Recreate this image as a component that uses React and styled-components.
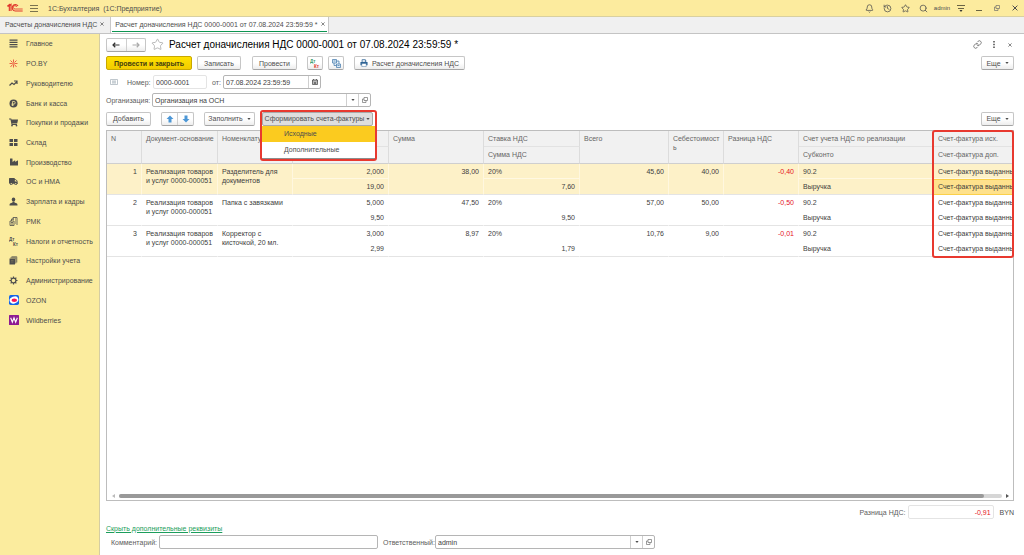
import React from "react";
import styled, { createGlobalStyle, css } from "styled-components";
import { FaShoppingCart, FaTruck, FaIndustry } from "react-icons/fa";
import { Bell, History, Star, Search, Link as LinkIcon } from "lucide-react";

const GlobalStyle = createGlobalStyle`
  * {
    box-sizing: border-box;
  }
  body {
    margin: 0;
    background: #fff;
    color: #4d4d4d;
    font-family: "Liberation Sans", Arial, sans-serif;
    font-size: 7px;
    line-height: 9px;
  }
  button, input {
    font: inherit;
    color: inherit;
    margin: 0;
    padding: 0;
    border: 0;
    background: none;
  }
  button {
    cursor: pointer;
  }
  svg {
    display: block;
    flex: none;
  }
`;

const Page = styled.div`
  display: flex;
  flex-direction: column;
  min-height: 100vh;
`;

const TitleBar = styled.header`
  display: flex;
  align-items: center;
  height: 17px;
  padding-left: 7px;
  background: #fceb9e;
  border-bottom: 1px solid #d9d0a0;
`;

const AppName = styled.span`
  flex: 1;
  margin-left: 10px;
  white-space: pre;
`;

const IconButton = styled.button`
  display: flex;
  align-items: center;
  justify-content: center;
  width: ${({ $width }) => $width || 18}px;
  height: 12px;
  color: ${({ $color }) => $color || "#4d4d4d"};
`;

const UserName = styled.button`
  width: 20px;
  font-size: 6px;
  white-space: nowrap;
`;

const TabBar = styled.nav`
  display: flex;
  height: 17px;
  background: #f0f0f0;
  border-bottom: 1px solid #c4c4c4;
`;

const Tab = styled.div`
  display: flex;
  align-items: center;
  padding: 0 ${({ $active }) => ($active ? 1 : 4)}px;
  border-right: 1px solid #c8c8c8;
  background: ${({ $active }) => ($active ? "#fff" : "transparent")};
  white-space: nowrap;
`;

const TabBody = styled.div`
  display: flex;
  align-items: center;
  align-self: stretch;
  gap: 2px;
  margin-bottom: 1px;
  padding: 0 1px 0 ${({ $active }) => ($active ? 3 : 1)}px;
  border-bottom: 1px solid ${({ $active }) => ($active ? "#0e9552" : "transparent")};
`;

const TabLink = styled.a`
  color: inherit;
  text-decoration: none;
`;

const Body = styled.div`
  display: flex;
  flex: 1;
`;

const Sidebar = styled.aside`
  flex: none;
  width: 100px;
  background: #fbec9e;
  border-right: 1px solid #d5cda3;
`;

const Menu = styled.nav`
  display: grid;
  grid-auto-rows: 1fr;
  height: 296px;
`;

const MenuItem = styled.a`
  display: flex;
  align-items: center;
  gap: 7px;
  padding-left: 8px;
  color: #4d4d4d;
  text-decoration: none;
  white-space: nowrap;
`;

const MenuIcon = styled.span`
  display: flex;
  justify-content: center;
  width: 11px;
`;

const Main = styled.main`
  display: flex;
  flex: 1;
  flex-direction: column;
  min-width: 0;
  padding: 4px 10px 6px 6px;
`;

const Row = styled.div`
  display: flex;
  align-items: center;
  flex: none;
  height: ${({ $height }) => $height || 14}px;
  margin-bottom: ${({ $after }) => $after ?? 4}px;
  white-space: nowrap;
`;

const Spacer = styled.span`
  flex: ${({ $width }) => ($width ? `0 0 ${$width}px` : "1")};
`;

const Title = styled.h1`
  flex: 1;
  margin: 0 0 0 5px;
  color: #000;
  font-size: 10px;
  font-weight: 400;
  line-height: 13px;
`;

const raised = css`
  border: 1px solid #c6c6c6;
  border-bottom-color: #a5a5a5;
  border-radius: 2px;
  background: linear-gradient(#fff 50%, #ededed);
`;

const Button = styled.button`
  ${raised}
  display: flex;
  align-items: center;
  justify-content: center;
  gap: 4px;
  flex: none;
  height: 14px;
  min-width: ${({ $width }) => $width}px;
  color: #4d4d4d;
  white-space: nowrap;

  ${({ $primary }) =>
    $primary &&
    css`
      border-color: #c9a800;
      background: linear-gradient(#ffe100, #f2cc00);
      color: #45400f;
      font-weight: 700;
    `}

  ${({ $pressed }) =>
    $pressed &&
    css`
      gap: 2px;
      border-color: #a9a9a9;
      background: #dedede;
    `}
`;

const ButtonPair = styled.div`
  ${raised}
  display: flex;
  width: ${({ $width }) => $width}px;
  height: 14px;

  button {
    flex: 1;
  }
  button + button {
    border-left: 1px solid #cfcfcf;
  }
`;

const Label = styled.label`
  flex: none;
  width: ${({ $width }) => $width}px;
  color: #5c5c5c;
`;

const Field = styled.div`
  display: flex;
  flex: 0 1 ${({ $width }) => $width}px;
  min-width: 0;
  height: 14px;
  border: 1px solid ${({ $light }) => ($light ? "#e4e4e4" : "#b5b5b5")};
  border-radius: 2px;
  background: #fff;

  button {
    flex: none;
    width: 12px;
    border-left: 1px solid #cfcfcf;
  }
`;

const Input = styled.input`
  flex: 1;
  min-width: 0;
  padding: 0 2px;
  outline: 0;
  color: ${({ $negative }) => ($negative ? "#e5141b" : "#404040")};
  text-align: ${({ $negative }) => ($negative ? "right" : "left")};
`;

const Dropdown = styled.div`
  position: relative;
  margin-left: 7px;
`;

const DropdownFrame = styled.div`
  position: absolute;
  z-index: 3;
  inset: -2px -4px -35px -2px;
  border: 2px solid #e8392f;
  border-radius: 3px;
  pointer-events: none;
`;

const DropdownList = styled.div`
  position: absolute;
  z-index: 2;
  top: 100%;
  left: 0;
  right: -2px;
  display: grid;
  grid-auto-rows: 16px;
  border-bottom: 1px solid #8d8d8d;
  background: #fff;
`;

const DropdownItem = styled.button`
  padding-left: 22px;
  background: ${({ $active }) => ($active ? "#fbcb1f" : "#fff")};
  text-align: left;
`;

const TablePanel = styled.div`
  display: flex;
  flex: 1;
  flex-direction: column;
  justify-content: space-between;
  margin-bottom: 4px;
  border: 1px solid #bdbdbd;
`;

const TableBox = styled.div`
  position: relative;
`;

const ColumnFrame = styled.div`
  position: absolute;
  inset: -1px -1px -1px auto;
  width: 9%;
  border: 2px solid #e8392f;
  border-radius: 3px;
  pointer-events: none;
`;

const Table = styled.table`
  width: 100%;
  table-layout: fixed;
  border-collapse: separate;
  border-spacing: 0;

  th:last-child, td:last-child {
    padding-right: 0;
  }
`;

const Th = styled.th`
  height: ${({ $last }) => ($last ? 17 : 16)}px;
  padding: 3px 1px 0 4px;
  border-right: 1px solid #dcdcdc;
  border-bottom: 1px solid ${({ $last }) => ($last ? "#cfcfcf" : "#e2e2e2")};
  background: #f1f1f1;
  color: #666;
  font-weight: 400;
  text-align: left;
  vertical-align: top;
  overflow-wrap: anywhere;
`;

const Td = styled.td`
  height: ${({ $half }) => $half || 31}px;
  padding: 3px 4px 0;
  overflow: hidden;
  border-right: 1px solid ${({ $selected }) => ($selected ? "#fff7df" : "transparent")};
  border-bottom: 1px solid
    ${({ $top, $selected }) => ($top ? ($selected ? "#fff8e2" : "transparent") : "#e4e4e4")};
  background: ${({ $selected }) => ($selected ? "#fdf1c8" : "#fff")};
  color: ${({ $negative }) => ($negative ? "#e5141b" : "#404040")};
  text-align: ${({ $right }) => ($right ? "right" : "left")};
  vertical-align: top;
  white-space: ${({ $wrap }) => ($wrap ? "pre-line" : "nowrap")};

  ${({ $clipped }) =>
    $clipped &&
    css`
      border-right: 0;
    `}

  ${({ $current }) =>
    $current &&
    css`
      border-bottom-color: #fbd04a;
      background: #fee18c;
      box-shadow: inset 0 1px #fbd04a;
    `}
`;

const ScrollRow = styled.div`
  display: flex;
  align-items: center;
  gap: 4px;
  height: 9px;
  padding: 0 4px 0 5px;
`;

const ScrollTrack = styled.div`
  flex: 1;
  height: 4px;
  border-radius: 2px;
  background: #d6d6d6;
`;

const ScrollThumb = styled.div`
  width: 98%;
  height: 4px;
  border-radius: 2px;
  background: #999;
`;

const ToggleLink = styled.a`
  color: #1c9e5c;
`;

const Caret = () => (
  <svg width="4" height="2" viewBox="0 0 4 2" aria-hidden="true">
    <path d="M.4 0h3.200L2 2z" fill="currentColor" />
  </svg>
);

const Cross = ({ size = 5 }) => (
  <svg width={size} height={size} viewBox="0 0 6 6" aria-hidden="true">
    <path d="M.6.6l4.800 4.800M5.400.6L.6 5.400" stroke="currentColor" strokeWidth="1" />
  </svg>
);

const OpenIcon = () => (
  <svg width="6" height="6" viewBox="0 0 12 12" fill="none" stroke="#666" strokeWidth="1.300">
    <path d="M4 1h7v6H4zM4 4H1v7h7V7" />
  </svg>
);

const Arrow = ({ back }) => (
  <svg width="8" height="6" viewBox="0 0 16 12" fill="none" stroke={back ? "#333" : "#aaa"} strokeWidth="2.400">
    <path d={back ? "M15 6H2M6.500 1.500L2 6l4.500 4.500" : "M1 6h13M9.500 1.500L14 6l-4.500 4.500"} />
  </svg>
);

const BlueArrow = ({ down }) => (
  <svg width="8" height="8" viewBox="0 0 16 16" fill="#4d97d6">
    <path d={down ? "M8 15L1 8h4V1h6v7h4z" : "M8 1l7 7h-4v7H5V8H1z"} />
  </svg>
);

const Logo = () => (
  <svg width="16" height="10" viewBox="0 0 48 30" fill="none" stroke="#e0352b" strokeWidth="3.500">
    <path d="M1 10l6-5v19M12 24V4L3 10" />
    <path d="M33 9a9.500 9.500 0 1 0-8 15h22" />
    <path d="M29 12a5 5 0 1 0-4 6h22" strokeWidth="2.500" />
  </svg>
);

const Burger = () => (
  <svg width="8" height="8" viewBox="0 0 8 8" stroke="#7a7350" strokeWidth="1">
    <path d="M0 1.500h8M0 4.500h8M0 7.500h8" />
  </svg>
);

const DtKt = ({ colored }) => (
  <svg width="10" height="9" viewBox="0 0 20 18" fontFamily="Liberation Sans" fontWeight="700" fontSize="9">
    <text x="0" y="8" fill={colored ? "#3a9c6c" : "#4d4d4d"}>Дт</text>
    <text x="8" y="17" fill={colored ? "#e0352b" : "#4d4d4d"}>Кт</text>
  </svg>
);

const Glyph = ({ children, size = 9, ...rest }) => (
  <svg width={size} height={size} viewBox="0 0 18 18" fill="#4d4d4d" {...rest}>
    {children}
  </svg>
);

const menu = [
  ["Главное", <Glyph><path d="M1 1h16v2.500H1zM1 5.500h16V8H1zM1 10h16v2.500H1zM1 14.500h16V17H1z" /></Glyph>],
  ["PO.BY", (
    <Glyph fill="none" stroke="#e8503a" strokeWidth="1.800">
      <path d="M9 1v5M3 3l4 4M15 3l-4 4M1 9h5M12 9h5M7 11l-4 5M9 12v5M11 11l4 5" />
      <circle cx="9" cy="9" r="1.500" />
    </Glyph>
  )],
  ["Руководителю", (
    <Glyph fill="none" stroke="#4d4d4d" strokeWidth="2.400">
      <path d="M1 13l5-5 4 3 6-6M10 4h6v6" />
    </Glyph>
  )],
  ["Банк и касса", (
    <Glyph>
      <circle cx="9" cy="9" r="8" />
      <path d="M7 14V5h3a2.500 2.500 0 0 1 0 5H5M5 12h5" fill="none" stroke="#fbec9e" strokeWidth="1.500" />
    </Glyph>
  )],
  ["Покупки и продажи", <FaShoppingCart size={9} />],
  ["Склад", <Glyph><path d="M1 2h7v6H1zM10 2h7v6h-7zM1 10h7v6H1zM10 10h7v6h-7z" /></Glyph>],
  ["Производство", <FaIndustry size={8} />],
  ["ОС и НМА", <FaTruck size={9} />],
  ["Зарплата и кадры", (
    <Glyph>
      <ellipse cx="9" cy="5" rx="3.500" ry="4" />
      <path d="M7 9h4v2l5 2q1 1 1 4H1q0-3 1-4l5-2z" />
    </Glyph>
  )],
  ["РМК", (
    <Glyph fill="none" stroke="#4d4d4d" strokeWidth="1.600">
      <path d="M8 6V1h8v15M2 8h8v9H2zM5 8V4h5M12 4h2M12 8h2M12 12h2M4 11h4M4 14h4" />
    </Glyph>
  )],
  ["Налоги и отчетность", <DtKt />],
  ["Настройки учета", (
    <Glyph>
      <path d="M1 5h11v12H1z" />
      <path d="M3 3.500h10.500V15M5 1.500h10.500V13" fill="none" stroke="#4d4d4d" strokeWidth="1.500" />
      <path d="M4 9h5M4 12h5" stroke="#8a8463" />
    </Glyph>
  )],
  ["Администрирование", (
    <Glyph fill="none" stroke="#4d4d4d">
      <circle cx="9" cy="9" r="4.800" strokeWidth="2.400" />
      <path
        d="M9 1v3M9 14v3M1 9h3M14 9h3M3.300 3.300l2.200 2.200M12.500 12.500l2.200 2.200M3.300 14.700l2.200-2.200M12.500 5.500l2.200-2.200"
        strokeWidth="2.400"
      />
    </Glyph>
  )],
  ["OZON", (
    <Glyph size={10}>
      <rect width="18" height="18" rx="3" fill="#1464e8" />
      <ellipse cx="9" cy="9" rx="8" ry="6" fill="#fff" transform="rotate(-20 9 9)" />
      <ellipse cx="9.500" cy="9.500" rx="5" ry="3" fill="#f91155" />
    </Glyph>
  )],
  ["Wildberries", (
    <Glyph size={10}>
      <rect width="18" height="18" rx="1" fill="#8d1b92" />
      <path d="M3 5l3 8 3-8 3 8 3-8" fill="none" stroke="#fff" strokeWidth="2" />
    </Glyph>
  )],
];

const columns = [
  { title: "N", width: 35 },
  { title: "Документ-основание", width: 76 },
  { title: "Номенклатура", width: 75 },
  { title: "Количество", sub: "Цена", width: 96 },
  { title: "Сумма", width: 95 },
  { title: "Ставка НДС", sub: "Сумма НДС", width: 96 },
  { title: "Всего", width: 89 },
  { title: "Себестоимость", width: 55 },
  { title: "Разница НДС", width: 75 },
  { title: "Счет учета НДС по реализации", sub: "Субконто", width: 135 },
  { title: "Счет-фактура исх.", sub: "Счет-фактура доп.", width: 79 },
];

const rows = [
  {
    item: "Разделитель для\nдокументов",
    qty: "2,000",
    price: "19,00",
    sum: "38,00",
    vat: "7,60",
    total: "45,60",
    cost: "40,00",
    diff: "-0,40",
  },
  {
    item: "Папка с завязками",
    qty: "5,000",
    price: "9,50",
    sum: "47,50",
    vat: "9,50",
    total: "57,00",
    cost: "50,00",
    diff: "-0,50",
  },
  {
    item: "Корректор с\nкисточкой, 20 мл.",
    qty: "3,000",
    price: "2,99",
    sum: "8,97",
    vat: "1,79",
    total: "10,76",
    cost: "9,00",
    diff: "-0,01",
  },
];

const invoice = "Счет-фактура выданный";

const Record = ({ row, index }) => {
  const selected = index === 0;
  const full = { rowSpan: 2, $selected: selected };
  const top = { $half: 15, $top: true, $selected: selected };
  const bottom = { $half: 16, $selected: selected };

  return (
    <>
      <tr>
        <Td {...full} $right>{index + 1}</Td>
        <Td {...full} $wrap>{"Реализация товаров\nи услуг 0000-000051"}</Td>
        <Td {...full} $wrap>{row.item}</Td>
        <Td {...top} $right>{row.qty}</Td>
        <Td {...full} $right>{row.sum}</Td>
        <Td {...top}>20%</Td>
        <Td {...full} $right>{row.total}</Td>
        <Td {...full} $right>{row.cost}</Td>
        <Td {...full} $right $negative>{row.diff}</Td>
        <Td {...top}>90.2</Td>
        <Td {...top} $clipped>{invoice}</Td>
      </tr>
      <tr>
        <Td {...bottom} $right>{row.price}</Td>
        <Td {...bottom} $right>{row.vat}</Td>
        <Td {...bottom}>Выручка</Td>
        <Td {...bottom} $clipped $current={selected}>{invoice}</Td>
      </tr>
    </>
  );
};

const InvoiceTable = () => (
  <TablePanel>
    <TableBox>
      <Table>
        <colgroup>
          {columns.map(({ title, width }) => (
            <col key={title} width={width} />
          ))}
        </colgroup>
        <thead>
          <tr>
            {columns.map(({ title, sub }) => (
              <Th key={title} rowSpan={sub ? 1 : 2} $last={!sub}>{title}</Th>
            ))}
          </tr>
          <tr>
            {columns.filter(({ sub }) => sub).map(({ sub }) => (
              <Th key={sub} $last>{sub}</Th>
            ))}
          </tr>
        </thead>
        <tbody>
          {rows.map((row, index) => (
            <Record key={row.item} row={row} index={index} />
          ))}
        </tbody>
      </Table>
      <ColumnFrame />
    </TableBox>
    <ScrollRow>
      <svg width="3" height="4" viewBox="0 0 3 4"><path d="M3 0v4L0 2z" fill="#bbb" /></svg>
      <ScrollTrack>
        <ScrollThumb />
      </ScrollTrack>
      <svg width="3" height="4" viewBox="0 0 3 4"><path d="M0 0v4l3-2z" fill="#555" /></svg>
    </ScrollRow>
  </TablePanel>
);

const WindowHeader = () => (
  <TitleBar>
    <Logo />
    <Spacer $width={6} />
    <IconButton $width={9} aria-label="Меню"><Burger /></IconButton>
    <AppName>{"1С:Бухгалтерия  (1С:Предприятие)"}</AppName>
    <IconButton aria-label="Уведомления"><Bell size={9} /></IconButton>
    <IconButton aria-label="История"><History size={9} /></IconButton>
    <IconButton aria-label="Избранное"><Star size={9} /></IconButton>
    <IconButton aria-label="Поиск"><Search size={9} /></IconButton>
    <UserName>admin</UserName>
    <IconButton aria-label="Настройки">
      <svg width="8" height="8" viewBox="0 0 8 8">
        <path d="M0 1.500h8M1 4.500h6" stroke="#6a6444" />
        <path d="M2.500 6h3L4 8z" fill="#333" />
      </svg>
    </IconButton>
    <IconButton aria-label="Свернуть">
      <svg width="6" height="6" viewBox="0 0 6 6"><path d="M0 5.500h6" stroke="#6a6444" /></svg>
    </IconButton>
    <IconButton aria-label="Развернуть"><OpenIcon /></IconButton>
    <IconButton aria-label="Закрыть"><Cross size={6} /></IconButton>
  </TitleBar>
);

const App = () => (
  <Page>
    <GlobalStyle />
    <WindowHeader />
    <TabBar>
      <Tab>
        <TabBody>
          <TabLink href="#list">Расчеты доначисления НДС</TabLink>
          <IconButton $width={6} aria-label="Закрыть вкладку"><Cross size={4} /></IconButton>
        </TabBody>
      </Tab>
      <Tab $active>
        <TabBody $active>
          <TabLink href="#doc">Расчет доначисления НДС 0000-0001 от 07.08.2024 23:59:59 *</TabLink>
          <IconButton $width={6} aria-label="Закрыть вкладку"><Cross size={4} /></IconButton>
        </TabBody>
      </Tab>
    </TabBar>
    <Body>
      <Sidebar>
        <Menu>
          {menu.map(([title, icon]) => (
            <MenuItem key={title} href="#section">
              <MenuIcon>{icon}</MenuIcon>
              {title}
            </MenuItem>
          ))}
        </Menu>
      </Sidebar>
      <Main>
        <Row $height={13} $after={5}>
          <ButtonPair $width={40}>
            <IconButton aria-label="Назад"><Arrow back /></IconButton>
            <IconButton aria-label="Вперед"><Arrow /></IconButton>
          </ButtonPair>
          <Spacer $width={5} />
          <IconButton $width={13} $color="#aaa" aria-label="В избранное">
            <Star size={13} strokeWidth={1.5} />
          </IconButton>
          <Title>Расчет доначисления НДС 0000-0001 от 07.08.2024 23:59:59 *</Title>
          <IconButton $width={10} aria-label="Ссылка"><LinkIcon size={9} strokeWidth={1.8} /></IconButton>
          <IconButton $width={24} aria-label="Действия">
            <svg width="2" height="7" viewBox="0 0 2 7"><path d="M0 0h2v1.500H0zM0 2.700h2v1.500H0zM0 5.500h2V7H0z" fill="#777" /></svg>
          </IconButton>
          <IconButton $width={8} aria-label="Закрыть"><Cross size={4} /></IconButton>
        </Row>
        <Row $after={5}>
          <Button $width={86} $primary>Провести и закрыть</Button>
          <Spacer $width={5} />
          <Button $width={44}>Записать</Button>
          <Spacer $width={11} />
          <Button $width={45}>Провести</Button>
          <Spacer $width={10} />
          <Button $width={16} aria-label="Движения документа"><DtKt colored /></Button>
          <Spacer $width={5} />
          <Button $width={16} aria-label="Структура подчиненности">
            <Glyph fill="#dceaf6" stroke="#4a7dad" strokeWidth="1.500">
              <path d="M1 1h8v7H1zM9 10h8v7H9zM4 8v5h5M9 4h5v6M3 4h4M11 13h4" />
            </Glyph>
          </Button>
          <Spacer $width={10} />
          <Button $width={111}>
            <Glyph size={8} fill="#2f6596">
              <path d="M4 1h8l2 2v4H4zM1 7h16v7H1z" />
              <path d="M5 2h7v5H5zM4 10h10v7H4z" fill="#fff" stroke="#2f6596" />
            </Glyph>
            Расчет доначисления НДС
          </Button>
          <Spacer />
          <Button $width={33}>Еще <Caret /></Button>
        </Row>
        <Row>
          <Spacer $width={4} />
          <svg width="8" height="6" viewBox="0 0 16 12" fill="none" stroke="#aab4bc" strokeWidth="1.500">
            <path d="M1 1h14v10H1zM4 4h8M4 6h8M4 8h8" />
          </svg>
          <Spacer $width={9} />
          <Label $width={26} htmlFor="number">Номер:</Label>
          <Field $width={54} $light><Input id="number" defaultValue="0000-0001" /></Field>
          <Spacer $width={5} />
          <Label $width={11} htmlFor="date">от:</Label>
          <Field $width={98}>
            <Input id="date" defaultValue="07.08.2024 23:59:59" />
            <IconButton aria-label="Календарь">
              <svg width="6" height="6" viewBox="0 0 12 12" fill="none" stroke="#444" strokeWidth="1.500">
                <path d="M1 2h10v9H1zM1 4h10M3 0v2M9 0v2M3 7h6M3 9h6" />
              </svg>
            </IconButton>
          </Field>
        </Row>
        <Row>
          <Label $width={46} htmlFor="company">Организация:</Label>
          <Field $width={219}>
            <Input id="company" defaultValue="Организация на ОСН" />
            <IconButton aria-label="Выбрать организацию"><Caret /></IconButton>
            <IconButton aria-label="Открыть организацию"><OpenIcon /></IconButton>
          </Field>
        </Row>
        <Row $height={15}>
          <Button $width={45}>Добавить</Button>
          <Spacer $width={10} />
          <ButtonPair $width={33}>
            <IconButton aria-label="Вверх"><BlueArrow /></IconButton>
            <IconButton aria-label="Вниз"><BlueArrow down /></IconButton>
          </ButtonPair>
          <Spacer $width={10} />
          <Button $width={51}>Заполнить <Caret /></Button>
          <Dropdown>
            <Button $width={111} $pressed aria-expanded="true">
              Сформировать счета-фактуры <Caret />
            </Button>
            <DropdownList>
              <DropdownItem $active>Исходные</DropdownItem>
              <DropdownItem>Дополнительные</DropdownItem>
            </DropdownList>
            <DropdownFrame />
          </Dropdown>
          <Spacer />
          <Button $width={33}>Еще <Caret /></Button>
        </Row>
        <InvoiceTable />
        <Row>
          <Spacer />
          <Label $width={48} htmlFor="difference">Разница НДС:</Label>
          <Field $width={86} $light>
            <Input id="difference" defaultValue="-0,91" $negative />
          </Field>
          <Spacer $width={6} />
          <span>BYN</span>
        </Row>
        <Row $height={10} $after={2}>
          <ToggleLink href="#details">Скрыть дополнительные реквизиты</ToggleLink>
        </Row>
        <Row $after={0}>
          <Spacer $width={5} />
          <Label $width={48} htmlFor="comment">Комментарий:</Label>
          <Field $width={219}><Input id="comment" /></Field>
          <Spacer $width={5} />
          <Label $width={52} htmlFor="owner">Ответственный:</Label>
          <Field $width={220}>
            <Input id="owner" defaultValue="admin" />
            <IconButton aria-label="Выбрать ответственного"><Caret /></IconButton>
            <IconButton aria-label="Открыть ответственного"><OpenIcon /></IconButton>
          </Field>
        </Row>
      </Main>
    </Body>
  </Page>
);

export default App;
